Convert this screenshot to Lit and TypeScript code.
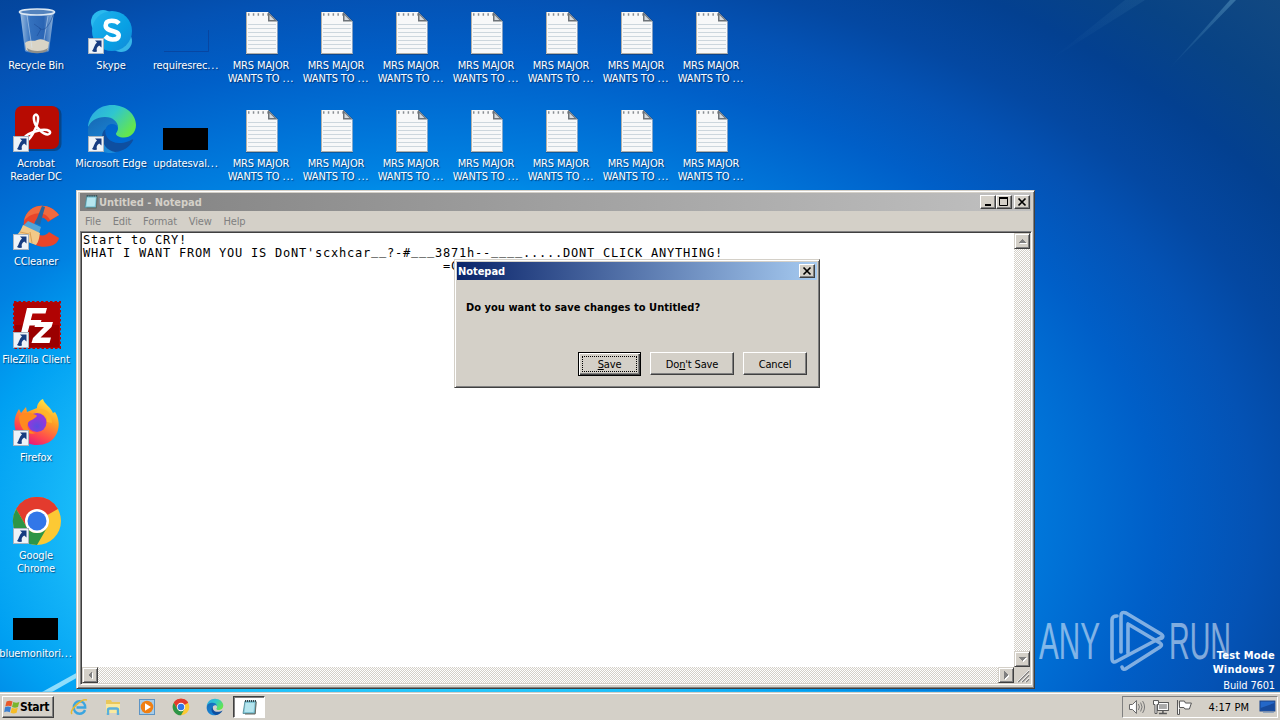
import { LitElement, html, css, svg } from 'lit';
import { customElement, property } from 'lit/decorators.js';

const shortcut = svg`
  <g transform="translate(0 31)">
    <rect x=".5" y=".5" width="15" height="15" fill="#eef3f8" stroke="#a9b4c0"/>
    <path d="M7 2.500h6.500v7l-2.300-2c-2.400 1.400-3 3.400-2.200 6-1.500.8-3.500.5-5-.5 2.300-2.500 2-6 5-8.500z" fill="#163c80"/>
  </g>`;

const notePage = svg`
  <path d="M8 5h23l9 9v34H8z" fill="#223" opacity=".35"/>
  <path d="M8 5h22l9.500 9.500V47H8z" fill="#f7f8f9"/>
  <path d="M10 17.500h28M10 21.500h28M10 25.500h28M10 29.500h28M10 33.500h28M10 37.500h28M10 41.500h28" stroke="#ccd6dd"/>
  <path d="M8.500 5v41.500h31" stroke="#b5b1a8" fill="none"/>
  <path d="M10 7.500h20" stroke="#8a8f94" stroke-width="2.500" stroke-dasharray="1.500 3.300"/>
  <path d="M30 5v9.500h9.500z" fill="#6d7379"/><path d="M31.500 8v5h5z" fill="#d5d9dc"/>`;

const blackBox = svg`<rect x="0" y="23" width="45" height="22" fill="#000"/>`;

const chrome = svg`
  <circle cx="24" cy="24" r="24" fill="#fcc934"/>
  <path d="M24 24L3.200 12A24 24 0 0 1 44.800 12z" fill="#e33b2e"/>
  <path d="M24 12h20.800A24 24 0 0 0 3.200 12L13.600 30z" fill="#e33b2e"/>
  <path d="M3.200 12A24 24 0 0 0 24 48l10.400-18A12 12 0 0 1 13.600 30z" fill="#2d9547"/>
  <circle cx="24" cy="24" r="12" fill="#fff"/><circle cx="24" cy="24" r="9.500" fill="#3277e8"/>`;

const edge = svg`
  <defs>
    <linearGradient id="ea" x1="0" y1="0" x2="1" y2=".6"><stop offset="0" stop-color="#2ba4e6"/><stop offset=".5" stop-color="#2fc6cf"/><stop offset="1" stop-color="#64e64e"/></linearGradient>
    <linearGradient id="eb" x1="0" y1="0" x2=".6" y2="1"><stop offset="0" stop-color="#1668b4"/><stop offset="1" stop-color="#1b8cdc"/></linearGradient>
  </defs>
  <path d="M0 22C1 9 11 0 24 0c14 0 24 9.500 24 20 0 8-6 12.500-12 12.500-5 0-8-2-8-3.800 0-1 2-2.200 2-5.700 0-5-5-9-11-9C10 14 3 17 0 22z" fill="url(#ea)"/>
  <path d="M0 24C1 16 9 12 17 12c8 0 13 5 13 10.500C29 18 17 16 17 28c0 9 9 15 17 15-3 3.500-7 5-11 5C9 48-1 38 0 24z" fill="url(#eb)"/>
  <path d="M17.500 24C16 31 22 38 31 38c7 0 10-2 13-3.500 1-.4 1.600.3 1 1C42 42 34 47 27 47c-8-1-13-9-13-15 0-4 1.500-6.500 3.500-8z" fill="#0e4fa0"/>`;

const icons: Record<string, unknown> = {
  bin: svg`
    <defs><linearGradient id="bn"><stop offset="0" stop-color="#b9d3ec"/><stop offset=".3" stop-color="#3d78c2"/><stop offset=".7" stop-color="#3169b6"/><stop offset="1" stop-color="#a9c8e6"/></linearGradient></defs>
    <path d="M7 4l5 40c3 3 21 3 24 0l5-40z" fill="url(#bn)" opacity=".85"/>
    <path d="M12 36c4-4 8-1 12-3 5-2 8 1 12 2l-1 8c-4 3-18 3-22 0z" fill="#d9d4c6"/>
    <path d="M14 41c5 4 16 4 21 0l-1 3c-5 3-15 3-19 0z" fill="#8e8f8b"/>
    <path d="M14 8l5 33M35 9l-4 24" stroke="#d8e9f8" opacity=".5"/>
    <path d="M21 17l7 5-4 7M40 8c-4 12-9 17-14 13" stroke="#1d4c97" fill="none" opacity=".6"/>
    <ellipse cx="24" cy="5" rx="17.500" ry="3" fill="#5483bd" stroke="#dce8f3" stroke-width="1.700"/>`,
  skype: svg`
    <defs><linearGradient id="sk" x1="0" y1="0" x2="1" y2="1"><stop offset="0" stop-color="#22b2ec"/><stop offset=".6" stop-color="#08a0e4"/><stop offset="1" stop-color="#1588d8"/></linearGradient></defs>
    <circle cx="15" cy="15" r="12" fill="#2ab9ee"/><circle cx="33" cy="34" r="11" fill="#36b6e8"/>
    <circle cx="24" cy="24" r="20" fill="url(#sk)"/>
    <path d="M31 16.500c-2-2.200-5-2.700-7.300-2.700-4 0-6 1.800-6 4.700 0 7 13 4 13 10 0 3-3 4-6 4-3.300 0-5.500-1.200-7.500-3.300" fill="none" stroke="#fff" stroke-width="4.600"/>${shortcut}`,
  acrobat: svg`
    <rect x="3.500" y="2" width="45" height="44" rx="7" fill="#102030" opacity=".4"/>
    <rect x="2" y="1" width="44" height="43" rx="7" fill="#b70b02"/>
    <path d="M12 34c-2-3 6-7 16-9 8-1 11 2 8 4-4 2-14-6-15-14-1-6 3-7 4-3 1 6-5 18-9 22-2 2-4 2-4 0z" fill="none" stroke="#fff" stroke-width="2.500"/>${shortcut}`,
  edge: svg`${edge}${shortcut}`,
  ccleaner: svg`
    <path d="M46 12C35-3 14 1 11 18c-3 17 11 29 26 25 5-1 8-4 9-8L36 29c-4 6-15 4-15-5 0-10 9-13 14-5z" fill="#e8452a"/>
    <path d="M46 12C35-3 14 1 11 18c7-9 21-11 26-1z" fill="#f06a3e"/>
    <path d="M29 3l3 1-5 18-5-2z" fill="#2466a2"/>
    <path d="M15 18l13 6-2 6-16-7z" fill="#51a4d8"/>
    <path d="M10 22l17 8c-1 5-1 8-4 12L1 34c5-3 7-7 9-12z" fill="#f3c987"/><path d="M7 29l9 2-3 8M17 29l2 11" stroke="#d99f55" fill="none"/>${shortcut}`,
  filezilla: svg`
    <rect x="1" y="1" width="46" height="46" fill="#b30505" stroke="#b30505" stroke-width="2" stroke-dasharray="2.500 2"/>
    <rect x="2" y="2" width="44" height="44" fill="#b00303"/><path d="M2 46V24h44v22z" fill="#9b0000"/>
    <path d="M14 7h20l-1.500 5.500H19.500l-1.700 6.500H28.500L27 24.500H16.500l-3 11.500H7z" fill="#fff"/>
    <path d="M23 21h17l-1.500 5-11 10.500H38L36.500 42H18.500l1.500-5 11-11h-9.500z" fill="#fff"/>${shortcut}`,
  firefox: svg`
    <defs>
      <linearGradient id="fa" x1=".8" y1="0" x2=".3" y2="1"><stop offset="0" stop-color="#fff04a"/><stop offset=".4" stop-color="#ff9d24"/><stop offset=".75" stop-color="#ff4650"/><stop offset="1" stop-color="#e01484"/></linearGradient>
      <radialGradient id="fb" cx=".5" cy=".7"><stop offset="0" stop-color="#5b4de0"/><stop offset="1" stop-color="#9238dd"/></radialGradient>
    </defs>
    <path d="M24 9c0-4 3-8 6-9 1 5 8 8 10 14l2-1c4 6 5 14 2 21-4 9-12 12-20 12C11 46 2 37 1.500 25 1.300 18 4 13 6 10l2 4 5-6 1 5z" fill="url(#fa)"/>
    <circle cx="24" cy="23.500" r="9.500" fill="url(#fb)"/>
    <path d="M6 17c5-3 8-4 12-3 3 2 5 1 6 3-3 4-8 4-9 7-2 4 1 9 8 10C13 37 6 29 6 17z" fill="#ff8a1e"/>
    <path d="M22 14c8-2 13 2 12 9l5 1c0-8-4-14-12-14z" fill="#ffb52c"/>${shortcut}`,
  chrome: svg`${chrome}${shortcut}`,
  note: notePage,
  black: blackBox,
  clear: svg`<path d="M1 44.500h44.500V23" stroke="#0a3f96" stroke-width="1" fill="none" opacity=".7"/>`,
};

interface Item { col: number; row: number; icon: string; label: string[]; }

const items: Item[] = [
  { col: 1, row: 1, icon: 'bin', label: ['Recycle Bin'] },
  { col: 1, row: 2, icon: 'acrobat', label: ['Acrobat', 'Reader DC'] },
  { col: 1, row: 3, icon: 'ccleaner', label: ['CCleaner'] },
  { col: 1, row: 4, icon: 'filezilla', label: ['FileZilla Client'] },
  { col: 1, row: 5, icon: 'firefox', label: ['Firefox'] },
  { col: 1, row: 6, icon: 'chrome', label: ['Google', 'Chrome'] },
  { col: 1, row: 7, icon: 'black', label: ['bluemonitori...'] },
  { col: 2, row: 1, icon: 'skype', label: ['Skype'] },
  { col: 2, row: 2, icon: 'edge', label: ['Microsoft Edge'] },
  { col: 3, row: 1, icon: 'clear', label: ['requiresrec...'] },
  { col: 3, row: 2, icon: 'black', label: ['updatesval...'] },
];
for (let col = 4; col <= 10; col++) {
  for (let row = 1; row <= 2; row++) {
    items.push({ col, row, icon: 'note', label: ['MRS MAJOR', 'WANTS TO ...'] });
  }
}

const padIcon = svg`
  <path d="M4 2h11l-1 12.500H2z" fill="#7fc4d4" stroke="#4d8792" stroke-width=".8"/>
  <path d="M4.500 4h9l-1 9H3.500z" fill="#b5e5ee"/>
  <path d="M4 2h11" stroke="#35474c" stroke-width="2" stroke-dasharray="1 1"/>
  <path d="M15.200 3l-1 12H4" stroke="#6b6b62" fill="none"/>`;

const quick = [
  svg`<svg viewBox="0 0 18 18"><path d="M15 12c-1 2.600-3.200 3.700-5.500 3.700C6 15.700 3.800 13 3.800 9.500S6 3.300 9.500 3.300s5.700 2.500 5.700 6.200H6.500" fill="none" stroke="#3ba5e0" stroke-width="2.400"/><path d="M2 16c-3-3 9-16 15-14" stroke="#e8b92c" stroke-width="1.500" fill="none"/></svg>`,
  svg`<svg viewBox="0 0 18 18"><path d="M2 2h5l1 2h8v11H2z" fill="#e9c75b"/><path d="M2 6h14v9H2z" fill="#f9e9a0"/><path d="M4 17v-5q0-1.500 1.500-1.500h7q1.500 0 1.500 1.500v5" fill="none" stroke="#5ab0dc" stroke-width="2.400"/></svg>`,
  svg`<svg viewBox="0 0 18 18"><rect x="1.500" y="1.500" width="15" height="15" fill="#a6cce9" stroke="#5d94c4"/><circle cx="9" cy="9" r="6.300" fill="#f07f12"/><path d="M7 5.300v7.400L13 9z" fill="#fff"/></svg>`,
  svg`<svg viewBox="-2 -2 52 52">${chrome}</svg>`,
  svg`<svg viewBox="-2 -2 52 52">${edge}</svg>`,
];

const note = [
  'Start to CRY!',
  "WHAT I WANT FROM YOU IS DoNT'scxhcar__?-#___3871h--____.....DONT CLICK ANYTHING!",
  ' '.repeat(45) + '=C',
].join('\n');

@customElement('desktop-icon')
export class DesktopIcon extends LitElement {
  static styles = css`
    :host {
      display: flex;
      flex-direction: column;
      align-items: center;
      width: 74px;
    }
    svg {
      display: block;
      width: 48px;
      height: 48px;
      margin: 0 0 4px 2px;
      overflow: visible;
    }
    .line {
      font: 11px/13px "DejaVu Sans Condensed", "DejaVu Sans", sans-serif;
      font-stretch: condensed;
      letter-spacing: -0.12px;
      color: #fff;
      white-space: nowrap;
      text-shadow: 1px 1px 1px rgba(0, 20, 60, .6);
    }
    .dots { letter-spacing: 0.8px; }
  `;

  @property() icon = '';
  @property({ type: Array }) label: string[] = [];

  render() {
    return html`
      <svg viewBox="0 0 48 48">${icons[this.icon]}</svg>
      ${this.label.map(l => html`<div class="line">${l.replace('...', '')}${l.endsWith('...') ? html`<span class="dots">...</span>` : ''}</div>`)}
    `;
  }
}

@customElement('scroll-button')
export class ScrollButton extends LitElement {
  static styles = css`
    :host {
      box-sizing: border-box;
      display: block;
      flex: none;
      width: 16px;
      height: 16px;
      background: #d4d0c8;
      border: 1px solid;
      border-color: #d4d0c8 #404040 #404040 #d4d0c8;
      box-shadow: inset 1px 1px #fff, inset -1px -1px #808080;
    }
    svg { display: block; width: 14px; height: 14px; }
  `;

  @property() dir = 'up';

  render() {
    const d: Record<string, string> = {
      up: 'M7 5l4 4H3z',
      down: 'M3 5h8l-4 4z',
      left: 'M5 7l4-4v8z',
      right: 'M9 7L5 3v8z',
    };
    return html`<svg viewBox="0 0 14 14" shape-rendering="crispEdges">
      <path d=${d[this.dir]} fill="#fff" transform="translate(1 1)"/><path d=${d[this.dir]} fill="#808080"/>
    </svg>`;
  }
}

@customElement('app-root')
export class AppRoot extends LitElement {
  static styles = css`
    :host {
      display: flex;
      flex-direction: column;
      position: relative;
      width: 1280px;
      height: 720px;
      overflow: hidden;
      font: 11px/13px "DejaVu Sans Condensed", "DejaVu Sans", sans-serif;
      font-stretch: condensed;
      letter-spacing: -0.15px;
      color: #000;
    }
    * { box-sizing: border-box; }
    svg { display: block; }
    .desktop {
      position: relative;
      height: 692px;
      background: radial-gradient(ellipse 1100px 700px at 430px 520px,
        #22c8fc 25%, #1cc2fb 30%, #12b2f7 35%, #00a0f2 42%, #0082e2 50%, #006ed4 59%,
        #005fc8 66%, #0452b4 75%, #0448a2 81%, #034090 90%, #084385 98%, #154a80 110%);
    }
    .rays { position: absolute; inset: 0; }
    .icons {
      position: relative;
      display: grid;
      grid-template-columns: repeat(10, 75px);
      grid-template-rows: repeat(7, 98px);
      margin-left: -1px;
      padding-top: 7px;
    }
    .mark { position: absolute; left: 1038px; top: 609px; overflow: visible; }
    .mark text { font-family: "Liberation Sans", sans-serif; font-size: 51px; letter-spacing: 0; }
    .build {
      position: absolute;
      right: 5px;
      top: 649px;
      text-align: right;
      color: #fff;
      font-size: 11px;
      line-height: 14px;
    }
    .build b { display: block; letter-spacing: 0.18px; }
    .build span { display: block; line-height: 17px; }

    .frame {
      position: absolute;
      display: flex;
      flex-direction: column;
      background: #d4d0c8;
      border: 1px solid;
      border-color: #d4d0c8 #404040 #404040 #d4d0c8;
      box-shadow: inset 1px 1px #fff, inset -1px -1px #808080;
    }
    .notepad { left: 76px; top: 190px; width: 959px; height: 499px; padding: 2px 2px 3px 3px; }
    .title {
      display: flex;
      align-items: center;
      height: 18px;
      flex: none;
      font-weight: bold;
      padding: 0 2px 0 1px;
      letter-spacing: -0.04px;
    }
    .title .name { flex: 1; }
    .notepad .title {
      color: #d4d0c8;
      background: linear-gradient(90deg, #808080, #c0c0c0);
      margin: 0 1px 0 0;
      padding-left: 3px;
      padding-right: 1px;
    }
    .notepad .title .pad { width: 16px; height: 16px; }
    .cap {
      width: 16px;
      height: 14px;
      background: #d4d0c8;
      border: 1px solid;
      border-color: #fff #404040 #404040 #fff;
      box-shadow: inset -1px -1px #808080;
    }
    .cap.gap { margin-left: 2px; }
    .cap svg { width: 14px; height: 12px; }
    .menu {
      display: flex;
      height: 20px;
      flex: none;
      gap: 11.8px;
      padding: 4px 5px 0;
      color: #808080;
    }
    .edit {
      flex: 1;
      display: grid;
      grid-template-columns: 1fr 16px;
      grid-template-rows: 1fr 16px;
      border: 1px solid;
      border-color: #808080 #fff #fff #808080;
      box-shadow: inset 1px 1px #404040;
      padding: 1px;
      background: #d4d0c8;
    }
    .text {
      margin: 0;
      background: #fff;
      overflow: hidden;
      padding: 1px 0 0 1px;
      font: 12px/13px "DejaVu Sans Mono", monospace;
      letter-spacing: 0.776px;
    }
    .low { vertical-align: 2px; line-height: 0; }
    .track {
      display: flex;
      justify-content: space-between;
      background: repeating-conic-gradient(#fff 0 25%, #d4d0c8 0 50%) 0 0 / 2px 2px;
    }
    .track.v { flex-direction: column; }

    .dialog { left: 454px; top: 259px; width: 366px; height: 129px; padding: 2px; }
    .dialog .title { color: #fff; background: linear-gradient(90deg, #0a246a, #a6caf0); }
    .ask { font-weight: bold; padding: 21px 0 0 9px; height: 72px; letter-spacing: 0.03px; }
    .buttons { display: flex; justify-content: flex-end; gap: 9px; padding-right: 10px; }
    .btn {
      height: 23px;
      width: 64px;
      display: flex;
      align-items: center;
      justify-content: center;
      padding-top: 1px;
      border: 1px solid;
      border-color: #fff #404040 #404040 #fff;
      box-shadow: inset -1px -1px #808080;
    }
    .btn.wide { width: 84px; }
    .btn.default {
      width: 63px;
      height: 24px;
      border-color: #000;
      box-shadow: inset 1px 1px #fff, inset -1px -1px #404040, inset -2px -2px #808080;
      padding: 3px;
    }
    .focus {
      flex: 1;
      align-self: stretch;
      display: flex;
      align-items: center;
      justify-content: center;
      border: 1px dotted #000;
    }

    .taskbar {
      height: 28px;
      display: flex;
      align-items: flex-start;
      padding: 3px 2px 0;
      background: #d4d0c8;
      border-top: 1px solid #d4d0c8;
      box-shadow: inset 0 1px #fff;
    }
    .start {
      display: flex;
      align-items: center;
      width: 52px;
      height: 22px;
      padding-left: 1px;
      border: 1px solid;
      border-color: #fff #404040 #404040 #fff;
      box-shadow: inset -1px -1px #808080;
      font-weight: bold;
      font-size: 12px;
      letter-spacing: -0.35px;
    }
    .start svg { width: 16px; height: 16px; }
    .quick { display: flex; gap: 16px; padding: 2px 0 0 16px; }
    .quick svg { width: 18px; height: 18px; }
    .task {
      width: 32px;
      height: 22px;
      margin-left: 9px;
      padding: 2px 7px;
      background: #fff;
      border: 1px solid;
      border-color: #404040 #fff #fff #404040;
      box-shadow: inset 1px 1px #808080;
    }
    .task svg { width: 17px; height: 17px; }
    .tray {
      display: flex;
      align-items: center;
      height: 22px;
      width: 156px;
      margin-left: auto;
      padding-left: 5px;
      border: 1px solid;
      border-color: #808080 #fff #fff #808080;
    }
    .tray svg { width: 18px; height: 16px; margin-right: 6px; }
    .tray .clock { margin: 0 10px 0 9px; white-space: nowrap; letter-spacing: 0.1px; }
    .tray svg.show { margin: 0; }
  `;

  renderNote() {
    return note.split(/(_+)/).map(part =>
      part.startsWith('_') ? html`<span class="low">${part}</span>` : part);
  }

  render() {
    return html`
      <div class="desktop">
        <svg class="rays" width="1280" height="692">
          <defs><linearGradient id="ray" x1="1" y1="0" x2="0" y2="1"><stop offset="0" stop-color="#7fc0e0" stop-opacity=".35"/><stop offset="1" stop-color="#7fc0e0" stop-opacity="0"/></linearGradient></defs>
          <path d="M1230 0l-62 70 68-70z" fill="url(#ray)"/>
          <path d="M1125 0l-75 60 95-60z" fill="url(#ray)" opacity=".25"/>
          <path d="M42 692L80 671v5L52 692z" fill="#bff2ff" opacity=".75"/>
          <path d="M0 691.500h1280" stroke="#3fb8f0" opacity=".4"/>
        </svg>
        <div class="icons">
          ${items.map(i => html`<desktop-icon
            style="grid-column:${i.col};grid-row:${i.row}"
            icon=${i.icon} .label=${i.label}></desktop-icon>`)}
        </div>
        <svg class="mark" width="200" height="64" fill="#fff" opacity=".5">
          <text x="1" y="50" textLength="61" lengthAdjust="spacingAndGlyphs">ANY</text>
          <text x="131" y="50" textLength="62" lengthAdjust="spacingAndGlyphs">RUN</text>
          <g fill="none" stroke="#fff" stroke-width="3.600" stroke-linejoin="round" stroke-linecap="round">
            <path d="M79 7q-5 0-5 4v38q0 6 5 3l45-24"/>
            <path d="M83 43V7q0-5 5-3l35 21q3 2 1 4l-3 1"/>
            <path d="M90 15v29M90 15l32 19q3 2 0 4L89 59q-4 3-5-1"/>
          </g>
        </svg>
        <div class="build"><b>Test Mode</b><b>Windows 7</b><span>Build 7601</span></div>

        <div class="frame notepad">
          <div class="title">
            <svg class="pad" viewBox="0 0 17 17">${padIcon}</svg>
            <span class="name">Untitled - Notepad</span>
            <div class="cap"><svg><path d="M4 9h6" stroke="#000" stroke-width="2"/></svg></div>
            <div class="cap"><svg><path d="M2.500 2v7.500h8V2z" stroke="#000" fill="none"/><path d="M2 2h9" stroke="#000" stroke-width="2"/></svg></div>
            <div class="cap gap"><svg><path d="M3.500 2.500l7 7m0-7l-7 7" stroke="#000" stroke-width="1.700"/></svg></div>
          </div>
          <div class="menu"><span>File</span><span>Edit</span><span>Format</span><span>View</span><span>Help</span></div>
          <div class="edit">
            <pre class="text">${this.renderNote()}</pre>
            <div class="track v"><scroll-button dir="up"></scroll-button><scroll-button dir="down"></scroll-button></div>
            <div class="track"><scroll-button dir="left"></scroll-button><scroll-button dir="right"></scroll-button></div>
            <svg width="16" height="16"><path d="M4 15L15 4M8 15l7-7M12 15l3-3" stroke="#808080" stroke-width="1.600"/><path d="M3 15L15 3M7 15l8-8M11 15l4-4" stroke="#fff" stroke-width=".8"/></svg>
          </div>
        </div>

        <div class="frame dialog">
          <div class="title">
            <span class="name">Notepad</span>
            <div class="cap"><svg><path d="M3.500 2.500l7 7m0-7l-7 7" stroke="#000" stroke-width="1.700"/></svg></div>
          </div>
          <div class="ask">Do you want to save changes to Untitled?</div>
          <div class="buttons">
            <div class="btn default"><div class="focus"><span><u>S</u>ave</span></div></div>
            <div class="btn wide"><span>Do<u>n</u>'t Save</span></div>
            <div class="btn"><span>Cancel</span></div>
          </div>
        </div>
      </div>

      <div class="taskbar">
        <div class="start">
          <svg viewBox="0 0 16 16">
            <path d="M2.500 2.500q3-1.500 6 0L7.300 7.500q-3-1.500-6 0z" fill="#e8582a"/>
            <path d="M9.300 3q3 1.500 6 0L14 8q-3 1.500-6 0z" fill="#79b52d"/>
            <path d="M1 8.300q3-1.500 6 0l-1.200 5q-3-1.500-5.600 0z" fill="#3a7fd0"/>
            <path d="M7.800 8.800q3 1.500 6 0l-1.200 5q-3 1.500-6 0z" fill="#f6bc26"/>
          </svg>Start
        </div>
        <div class="quick">${quick}</div>
        <div class="task"><svg viewBox="0 0 17 17">${padIcon}</svg></div>
        <div class="tray">
          <svg viewBox="0 0 18 16"><path d="M1.500 5.500h3l4-4v13l-4-4h-3z" fill="#fff" stroke="#666"/><path d="M10.500 5q2 3 0 6M12.700 3.500q3 4.500 0 9M14.700 2q4 6 0 12" fill="none" stroke="#777"/></svg>
          <svg viewBox="0 0 18 16"><rect x="5.500" y="3.500" width="11" height="8" fill="#a9a9a9" stroke="#555"/><rect x="6.500" y="4.500" width="9" height="6" fill="none" stroke="#fff"/><path d="M7 14.500h8M11 12v2" stroke="#555" stroke-width="1.500"/><path d="M1.500 1.500h5v4h-1.500v9h-2v-9H1.500z" fill="#fff" stroke="#555"/></svg>
          <svg viewBox="0 0 18 16"><path d="M1.500 1v14.500h2V10" fill="#fff" stroke="#555"/><path d="M3.500 2h5l1 2h6l-2 6H9l-1-1.500H3.500z" fill="#fff" stroke="#555"/></svg>
          <span class="clock">4:17 PM</span>
          <svg class="show" viewBox="0 0 18 16"><rect x="1" y="2" width="15" height="10" fill="#2467c8" stroke="#17428a"/><path d="M1.500 9l14-5v7.500h-14z" fill="#174a9c"/><path d="M4 13.500h11" stroke="#8fa4bd"/></svg>
        </div>
      </div>
    `;
  }
}
